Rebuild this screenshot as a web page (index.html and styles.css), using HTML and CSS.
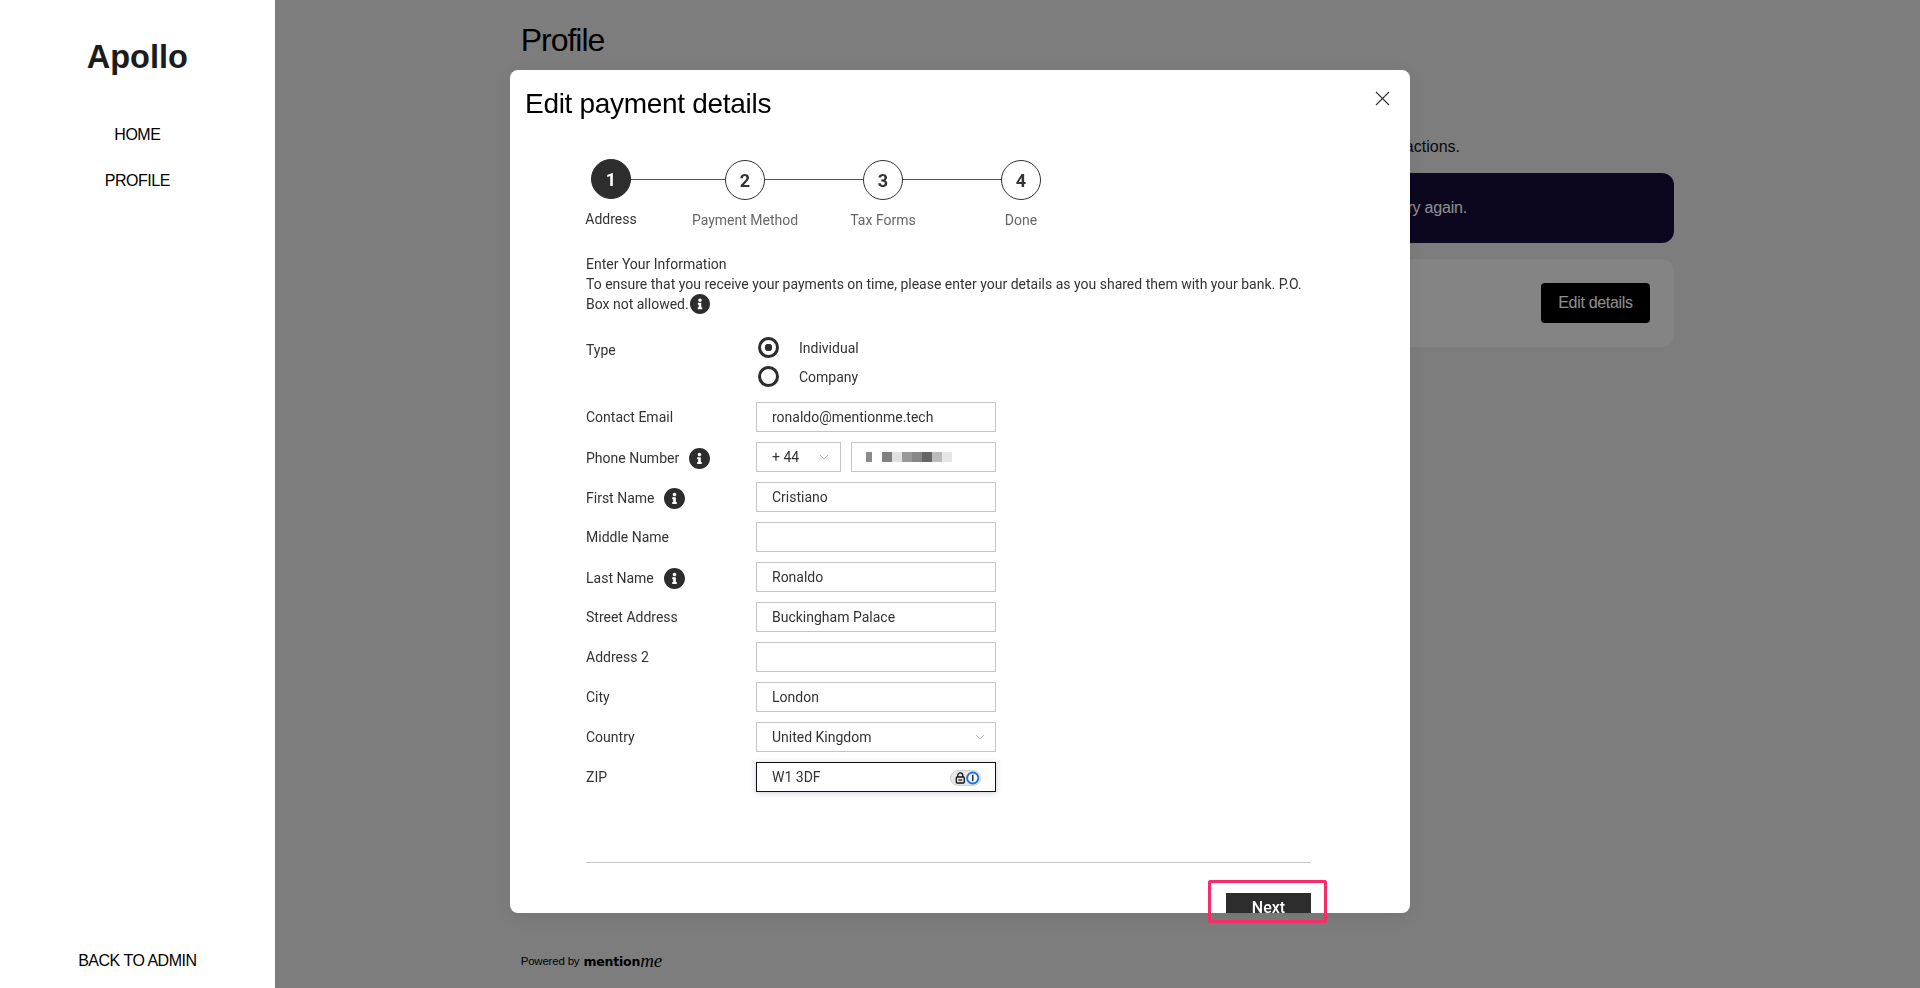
FILE: index.html
```html
<!DOCTYPE html>
<html>
<head>
    <meta charset="UTF-8">
    <title>Apollo - Profile</title>
    <link rel="stylesheet" href="styles.css">
</head>
<body>
    <svg class="icon-defs" width="0" height="0">
        <symbol id="info" viewBox="8 8 496 496">
            <path d="M256 8C119.043 8 8 119.083 8 256c0 136.997 111.043 248 248 248s248-111.003 248-248C504 119.083 392.957 8 256 8zm0 110c23.196 0 42 18.804 42 42s-18.804 42-42 42-42-18.804-42-42 18.804-42 42-42zm56 254c0 6.627-5.373 12-12 12h-88c-6.627 0-12-5.373-12-12v-24c0-6.627 5.373-12 12-12h12v-64h-12c-6.627 0-12-5.373-12-12v-24c0-6.627 5.373-12 12-12h64c6.627 0 12 5.373 12 12v100h12c6.627 0 12 5.373 12 12v24z"/>
        </symbol>
        <symbol id="chevron" viewBox="0 0 10 6">
            <path d="M1 1l4 4 4-4" fill="none" stroke="currentColor" stroke-width="1"/>
        </symbol>
    </svg>

    <aside class="sidebar">
        <div class="brand">Apollo</div>
        <nav class="nav">
            <a href="#">HOME</a>
            <a href="#">PROFILE</a>
        </nav>
        <a class="back-link" href="#">BACK TO ADMIN</a>
    </aside>

    <main class="main">
        <h1>Profile</h1>
        <p class="intro">Keep your details up to date to receive your transactions.</p>
        <div class="banner">Please try again.</div>
        <div class="details-card">
            <button class="dark-btn">Edit details</button>
        </div>
        <footer class="powered">
            <span>Powered by</span>
            <span class="logo-word">mention</span><span class="logo-me">me</span>
        </footer>
    </main>

    <div class="overlay">
        <div class="modal">
            <h2 class="modal-title">Edit payment details</h2>
            <button class="close-btn" aria-label="Close">
                <svg width="15" height="15" viewBox="0 0 15 15"><path d="M1 1l13 13M14 1L1 14" stroke="#333" stroke-width="1.1" fill="none"/></svg>
            </button>

            <div class="modal-body">
                <div class="stepper">
                    <div class="step active"><div class="step-num">1</div><div class="step-label">Address</div></div>
                    <div class="step-line first"></div>
                    <div class="step"><div class="step-num">2</div><div class="step-label">Payment Method</div></div>
                    <div class="step-line"></div>
                    <div class="step"><div class="step-num">3</div><div class="step-label">Tax Forms</div></div>
                    <div class="step-line"></div>
                    <div class="step"><div class="step-num">4</div><div class="step-label">Done</div></div>
                </div>

                <div class="form-intro">
                    Enter Your Information<br>
                    To ensure that you receive your payments on time, please enter your details as you shared them with your bank. P.O. Box not allowed.<svg class="info-icon inline"><use href="#info"/></svg>
                </div>

                <div class="type-row">
                    <span class="field-label">Type</span>
                    <div class="radios">
                        <label class="radio"><input type="radio" name="type" checked><span>Individual</span></label>
                        <label class="radio"><input type="radio" name="type"><span>Company</span></label>
                    </div>
                </div>

                <div class="form-grid">
                    <label class="field-label">Contact Email</label>
                    <input class="text-input" type="text" value="ronaldo@mentionme.tech">

                    <label class="field-label has-info">Phone Number <svg class="info-icon"><use href="#info"/></svg></label>
                    <div class="phone">
                        <div class="select-wrap code">
                            <select class="text-input"><option>+ 44</option></select>
                            <svg class="chevron"><use href="#chevron"/></svg>
                        </div>
                        <div class="text-input mosaic">
                            <i></i><i class="blank"></i><i></i><i></i><i></i><i></i><i></i><i></i><i></i>
                        </div>
                    </div>

                    <label class="field-label has-info">First Name <svg class="info-icon"><use href="#info"/></svg></label>
                    <input class="text-input" type="text" value="Cristiano">

                    <label class="field-label">Middle Name</label>
                    <input class="text-input" type="text">

                    <label class="field-label has-info">Last Name <svg class="info-icon"><use href="#info"/></svg></label>
                    <input class="text-input" type="text" value="Ronaldo">

                    <label class="field-label">Street Address</label>
                    <input class="text-input" type="text" value="Buckingham Palace">

                    <label class="field-label">Address 2</label>
                    <input class="text-input" type="text">

                    <label class="field-label">City</label>
                    <input class="text-input" type="text" value="London">

                    <label class="field-label">Country</label>
                    <div class="select-wrap">
                        <select class="text-input"><option>United Kingdom</option></select>
                        <svg class="chevron"><use href="#chevron"/></svg>
                    </div>

                    <label class="field-label">ZIP</label>
                    <div class="zip-wrap">
                        <input class="text-input focused" type="text" value="W1 3DF">
                        <span class="pw-badge">
                            <svg width="11" height="12" viewBox="0 0 10 12"><path d="M2.5 5V3.4a2.5 2.5 0 0 1 5 0V5" fill="none" stroke="#111" stroke-width="1.3"/><rect x="1" y="5" width="8" height="6" rx="1" fill="none" stroke="#111" stroke-width="1.3"/><rect x="3" y="7.4" width="4" height="1.2" fill="#111"/></svg>
                            <svg width="14" height="14" viewBox="0 0 14 14"><circle cx="7" cy="7" r="5.8" fill="#fff" stroke="#1a73e8" stroke-width="2"/><rect x="6.2" y="3.6" width="1.6" height="6.8" fill="#1c2b4a"/></svg>
                        </span>
                    </div>
                </div>

                <hr class="divider">
                <div class="modal-actions">
                    <button class="next-btn">Next</button>
                </div>
            </div>
        </div>
    </div>

    <div class="highlight"></div>
</body>
</html>
```

FILE: styles.css
```css
* {
    box-sizing: border-box;
}

html, body {
    height: 100%;
}

body {
    margin: 0;
    display: flex;
    overflow: hidden;
    font-family: 'Liberation Sans', Arial, sans-serif;
    background-color: #e0e0e2;
    color: #111;
}

.icon-defs {
    position: absolute;
}

/* sidebar stays above the overlay */
.sidebar {
    position: relative;
    z-index: 2;
    width: 274.67px;
    flex-shrink: 0;
    display: flex;
    flex-direction: column;
    align-items: center;
    background-color: #fff;
    padding: 38px 0 17px;
}

.brand {
    font-size: 32.5px;
    line-height: 38px;
    font-weight: bold;
    color: #1c1c1c;
}

.nav {
    margin-top: 49px;
    display: flex;
    flex-direction: column;
    align-items: center;
    gap: 26px;
}

.nav a,
.back-link {
    font-size: 16px;
    line-height: 20px;
    color: #000;
    text-decoration: none;
    letter-spacing: -0.5px;
}

.back-link {
    margin-top: auto;
}

.main {
    flex: 1;
    display: flex;
    flex-direction: column;
    padding: 0 246px 17px;
}

h1 {
    margin: 20px 0 0;
    font-size: 32px;
    line-height: 40px;
    font-weight: normal;
    letter-spacing: -1px;
    color: #000;
}

.intro {
    margin: 77px 0 0;
    padding-right: 214px;
    text-align: right;
    font-size: 16px;
    line-height: 20px;
}

.banner {
    margin-top: 16px;
    height: 70px;
    padding-right: 207px;
    display: flex;
    align-items: center;
    justify-content: flex-end;
    background-color: #160e39;
    border-radius: 12px;
    color: #fff;
    font-size: 16px;
    letter-spacing: -0.2px;
}

.details-card {
    margin-top: 16px;
    height: 88px;
    padding: 0 24px;
    display: flex;
    align-items: center;
    justify-content: flex-end;
    background-color: #ededed;
    border-radius: 12px;
}

.dark-btn {
    width: 109px;
    height: 40px;
    border: none;
    border-radius: 4px;
    background-color: #000;
    color: #fff;
    font-family: inherit;
    font-size: 16px;
    letter-spacing: -0.3px;
}

.powered {
    margin-top: auto;
    display: flex;
    align-items: center;
    height: 20px;
    font-size: 11.5px;
    color: #000;
    letter-spacing: -0.2px;
}

.logo-word {
    margin-left: 4px;
    font-family: 'DejaVu Sans', sans-serif;
    font-size: 12.5px;
    font-weight: bold;
}

.logo-me {
    font-family: 'Liberation Serif', serif;
    font-style: italic;
    font-size: 19px;
    line-height: 20px;
}

/* modal */
.overlay {
    position: fixed;
    inset: 0;
    z-index: 1;
    display: flex;
    justify-content: center;
    padding-top: 70px;
    background-color: rgba(0, 0, 0, 0.443);
}

.modal {
    position: relative;
    width: 900px;
    height: 843px;
    overflow: hidden;
    background-color: #fff;
    border-radius: 8px;
    box-shadow: 0 4px 24px rgba(0, 0, 0, 0.08);
    font-family: Roboto, sans-serif;
    color: #333;
}

.modal-title {
    margin: 16px 0 0 15px;
    font-family: 'Liberation Sans', Arial, sans-serif;
    font-size: 28px;
    line-height: 36px;
    font-weight: normal;
    letter-spacing: -0.3px;
    color: #000;
}

.close-btn {
    position: absolute;
    top: 21px;
    right: 20px;
    padding: 0;
    border: none;
    background: none;
    line-height: 0;
}

.modal-body {
    padding: 0 99px 0 76px;
    font-size: 14px;
}

.stepper {
    margin-top: 38px;
    margin-left: 5px;
    display: flex;
    height: 70px;
}

.step {
    width: 40px;
    display: flex;
    flex-direction: column;
    align-items: center;
}

.step-num {
    width: 40px;
    height: 40px;
    flex-shrink: 0;
    display: flex;
    align-items: center;
    justify-content: center;
    border: 1px solid #333;
    border-radius: 50%;
    background-color: #fff;
    font-size: 18px;
    font-weight: 700;
}

.step-label {
    margin-top: 10px;
    line-height: 20px;
    white-space: nowrap;
    color: #666;
}

.step.active {
    margin-top: -1px;
}

.step.active .step-num {
    background-color: #2d2d2d;
    border-color: #2d2d2d;
    color: #fff;
}

.step.active .step-label {
    color: #333;
}

.step-line {
    width: 98px;
    height: 1px;
    margin-top: 19px;
    background-color: #555;
}

.step-line.first {
    width: 94px;
}

.form-intro {
    margin-top: 24px;
    line-height: 20px;
}

.info-icon {
    width: 21px;
    height: 21px;
    margin-left: 6px;
    fill: #2d2d2d;
    vertical-align: middle;
}

.info-icon.inline {
    margin-left: 1px;
    width: 20px;
    height: 20px;
    vertical-align: -5px;
}

.type-row {
    margin-top: 21px;
    display: flex;
}

.field-label {
    display: flex;
    align-items: center;
    gap: 4px;
    color: #333;
    white-space: nowrap;
}

.field-label.has-info {
    padding-top: 2px;
}

.type-row .field-label {
    width: 170px;
    height: 30px;
}

.radios {
    display: flex;
    flex-direction: column;
    gap: 8px;
    margin-top: 2px;
}

.radio {
    display: flex;
    align-items: center;
    height: 21px;
    padding-left: 2px;
    gap: 20px;
}

.radio input {
    appearance: none;
    width: 21px;
    height: 21px;
    margin: 0;
    border: 3.5px solid #2d2d2d;
    border-radius: 50%;
    background-color: #fff;
}

.radio input:checked {
    background: radial-gradient(circle, #2d2d2d 0 3.5px, #fff 4px);
}

.form-grid {
    margin-top: 15px;
    display: grid;
    grid-template-columns: 170px 240px;
    grid-auto-rows: 30px;
    row-gap: 10px;
}

.text-input {
    width: 100%;
    height: 30px;
    padding: 0 15px;
    border: 1px solid #c4c4c4;
    border-radius: 0;
    background-color: #fff;
    font-family: Roboto, sans-serif;
    font-size: 14px;
    color: #333;
    outline: none;
}

select.text-input {
    appearance: none;
}

.text-input.focused {
    border-color: #111;
    box-shadow: 0 1px 6px rgba(60, 60, 120, 0.25);
}

.phone {
    display: flex;
    gap: 10px;
}

.select-wrap {
    position: relative;
    flex: 1;
}

.select-wrap.code {
    flex: 0 0 85px;
}

.chevron {
    position: absolute;
    top: 12px;
    right: 11px;
    width: 10px;
    height: 6px;
    color: #b5b5b5;
    pointer-events: none;
}

.code .chevron {
    right: 12px;
}

.mosaic {
    flex: 1;
    display: flex;
    align-items: center;
    padding-left: 14px;
}

.mosaic i {
    width: 10px;
    height: 10px;
}

.mosaic i:nth-child(1) { width: 6px; background-color: #8a8a8a; }
.mosaic i:nth-child(3) { background-color: #808080; }
.mosaic i:nth-child(4) { background-color: #e0e0e0; }
.mosaic i:nth-child(5) { background-color: #999; }
.mosaic i:nth-child(6) { background-color: #888; }
.mosaic i:nth-child(7) { background-color: #666; }
.mosaic i:nth-child(8) { background-color: #bbb; }
.mosaic i:nth-child(9) { background-color: #e6e6e6; }

.zip-wrap {
    position: relative;
}

.pw-badge {
    position: absolute;
    top: 8px;
    right: 15px;
    width: 31px;
    height: 16px;
    display: flex;
    align-items: center;
    justify-content: space-between;
    padding: 0 1px 0 4px;
    border: 1px solid #d0d0d0;
    border-radius: 8px;
    background-color: #e8e8e8;
}

.divider {
    margin: 70px 0 0;
    border: none;
    border-top: 1px solid #c4c4c4;
}

.modal-actions {
    margin-top: 30px;
    display: flex;
    justify-content: flex-end;
}

.next-btn {
    width: 85px;
    height: 40px;
    padding: 5px 0 0;
    display: flex;
    justify-content: center;
    border: none;
    background-color: #2d2d2d;
    color: #fff;
    font-family: Roboto, sans-serif;
    font-size: 16px;
    line-height: 20px;
    font-weight: 500;
}

/* marker drawn on top of the screen */
.highlight {
    position: fixed;
    z-index: 3;
    top: 880px;
    left: 1208px;
    width: 119px;
    height: 43px;
    border: 3px solid #f72c6b;
    border-radius: 2px;
}
```
